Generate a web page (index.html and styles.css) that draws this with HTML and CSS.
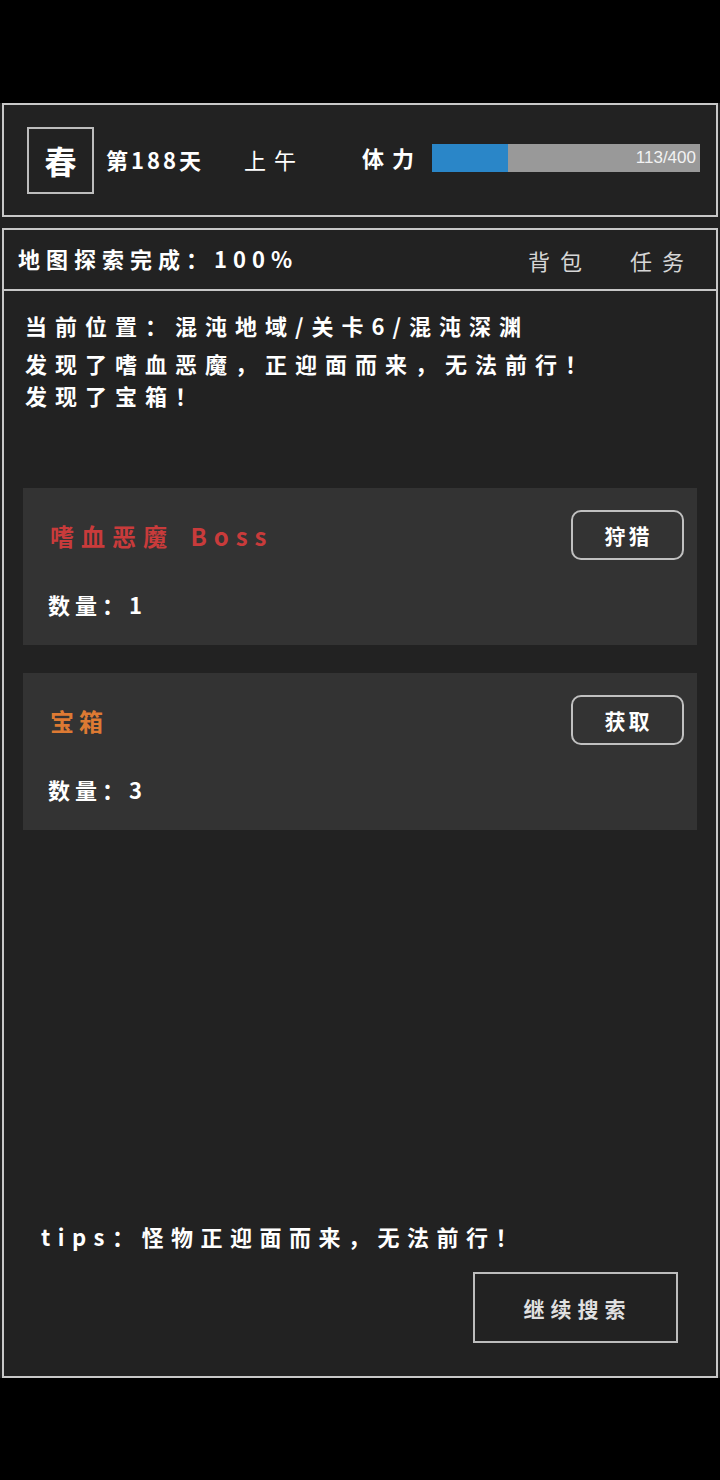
FILE: index.html
```html
<!DOCTYPE html>
<html lang="zh-CN">
<head>
  <meta charset="UTF-8">
  <meta name="viewport" content="width=device-width, initial-scale=1.0">
  <title>探索</title>
  <link rel="stylesheet" href="styles.css">
</head>
<body>

<div id="app">
  <!-- Status bar -->
  <div id="status-box">
    <div id="season">春</div>
    <div id="day">第188天</div>
    <div id="time">上午</div>
    <div id="stamina-label">体力</div>
    <div id="stamina-bar">
      <div id="stamina-fill" style="width: 28.25%;"></div>
      <span id="stamina-text">113/400</span>
    </div>
  </div>

  <!-- Map progress -->
  <div id="map-box">
    <div id="map-progress">地图探索完成：100%</div>
    <div id="map-links">
      <span>背包</span>
      <span>任务</span>
    </div>
  </div>

  <!-- Main panel -->
  <div id="main-panel">
    <div id="log">
      <div class="log-line first">当前位置：混沌地域/关卡6/混沌深渊</div>
      <div class="log-line">发现了嗜血恶魔，正迎面而来，无法前行！</div>
      <div class="log-line">发现了宝箱！</div>
    </div>

    <div class="card">
      <div class="card-head">
        <div class="card-title boss">嗜血恶魔 Boss</div>
        <button class="card-button">狩猎</button>
      </div>
      <div class="card-count">数量：1</div>
    </div>

    <div class="card">
      <div class="card-head">
        <div class="card-title chest">宝箱</div>
        <button class="card-button">获取</button>
      </div>
      <div class="card-count">数量：3</div>
    </div>

    <div id="tips">tips：怪物正迎面而来，无法前行！</div>
    <button id="continue-button">继续搜索</button>
  </div>
</div>

</body>
</html>
```

FILE: styles.css
```css
body {
  margin: 0;
  background-color: #000;
  font-family: "Noto Sans CJK SC", "Liberation Sans", sans-serif;
  color: #fff;
}

#app {
  margin-top: 103px;
  height: 1275px;
  background-color: #222;
  display: flex;
  flex-direction: column;
  box-sizing: border-box;
  padding: 0 2px;
}

#status-box {
  height: 114px;
  box-sizing: border-box;
  border: 2px solid #c8c8c8;
  display: flex;
  align-items: center;
  padding-left: 23px;
}

#season {
  width: 67px;
  height: 67px;
  box-sizing: border-box;
  border: 2px solid #bdbdbd;
  display: flex;
  justify-content: center;
  align-items: center;
  font-size: 32px;
  font-weight: bold;
}

#day {
  font-size: 22px;
  font-weight: bold;
  letter-spacing: 3px;
  margin-left: 12px;
  margin-top: -3px;
}

#time {
  font-size: 22px;
  margin-left: 40px;
  margin-top: -3px;
  letter-spacing: 8px;
}

#stamina-label {
  font-size: 22px;
  font-weight: bold;
  letter-spacing: 8px;
  margin-left: 58px;
  margin-top: -6px;
}

#stamina-bar {
  position: relative;
  width: 268px;
  height: 28px;
  margin-left: 10px;
  margin-top: -4px;
  background-color: #999;
}

#stamina-fill {
  height: 100%;
  background-color: #2a86c8;
}

#stamina-text {
  position: absolute;
  right: 4px;
  top: 0;
  line-height: 28px;
  font-family: "Liberation Sans", sans-serif;
  font-size: 17px;
  color: #f2f2f2;
}

#map-box {
  margin-top: 11px;
  height: 61px;
  box-sizing: border-box;
  border: 2px solid #c8c8c8;
  border-bottom: none;
  display: flex;
  align-items: center;
  justify-content: space-between;
  padding: 0 22px 0 14px;
}

#map-progress {
  font-size: 22px;
  font-weight: bold;
  letter-spacing: 6px;
  margin-top: -4px;
}

#map-links {
  display: flex;
  gap: 38px;
  font-size: 22px;
  color: #d6d6d6;
  letter-spacing: 10px;
}

#main-panel {
  flex: 1;
  border: 2px solid #c8c8c8;
  display: flex;
  flex-direction: column;
  padding: 0 19px 33px 19px;
}

#log {
  margin-top: 18px;
  margin-left: 2px;
}

.log-line {
  font-size: 22px;
  font-weight: bold;
  letter-spacing: 8px;
  line-height: 32px;
}

.log-line.first {
  margin-bottom: 6px;
}

.card {
  background-color: #333;
  margin-top: 28px;
  padding: 22px 13px 29px 27px;
}

#log + .card {
  margin-top: 77px;
}

.card-head {
  display: flex;
  justify-content: space-between;
  align-items: center;
}

.card-title {
  font-size: 24px;
  font-weight: bold;
  letter-spacing: 7px;
}

.card-title.boss {
  color: #c93b3b;
  word-spacing: 4px;
}

.card-title.chest {
  color: #dd7a33;
  letter-spacing: 5px;
}

.card-button {
  width: 113px;
  height: 50px;
  box-sizing: border-box;
  border: 2px solid #c0c0c0;
  border-radius: 10px;
  background-color: transparent;
  color: #fff;
  font-family: "Noto Sans CJK SC", sans-serif;
  font-size: 21px;
  font-weight: bold;
  letter-spacing: 3px;
  padding-left: 8px;
}

.card-count {
  margin-top: 32px;
  font-size: 22px;
  font-weight: bold;
  line-height: 24px;
  letter-spacing: 5px;
  margin-left: -2px;
}

#tips {
  margin-top: auto;
  margin-left: 18px;
  font-size: 22px;
  font-weight: bold;
  letter-spacing: 7.5px;
}

#continue-button {
  align-self: flex-end;
  margin-top: 20px;
  margin-right: 19px;
  width: 205px;
  height: 71px;
  box-sizing: border-box;
  border: 2px solid #bdbdbd;
  background-color: transparent;
  color: #e0e0e0;
  font-family: "Noto Sans CJK SC", sans-serif;
  font-size: 21px;
  font-weight: bold;
  letter-spacing: 6px;
  padding-left: 10px;
}
```
